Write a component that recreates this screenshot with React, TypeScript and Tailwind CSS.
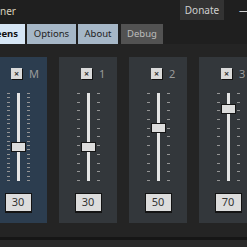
const channels = [
  { label: "M", value: 30, dense: true, master: true },
  { label: "1", value: 30, dense: false, master: false },
  { label: "2", value: 50, dense: false, master: false },
  { label: "3", value: 70, dense: false, master: false },
];

const Ticks = ({ count, side }: { count: number; side: "left" | "right" }) => (
  <div
    className={`absolute top-0 flex h-[88px] flex-col justify-between ${
      side === "left" ? "left-[18px]" : "left-[38px]"
    }`}
  >
    {Array.from({ length: count }).map((_, i) => (
      <span key={i} className="block h-[1px] w-[3px] bg-[#959595]" />
    ))}
  </div>
);

const Channel = ({
  label,
  value,
  dense,
  master,
}: {
  label: string;
  value: number;
  dense: boolean;
  master: boolean;
}) => (
  <div
    className={`flex h-[166px] w-[58px] shrink-0 flex-col ${
      master ? "bg-[#2c3d4f]" : "bg-[#33373b]"
    }`}
  >
    {/* mute + label */}
    <div className="mt-[11px] flex items-center gap-[7px] pl-[22px]">
      <div className="flex h-[11px] w-[11px] items-center justify-center bg-[#dadada] text-[9px] font-bold leading-none text-[#333] shadow-[1px_1px_0_#111]">
        ×
      </div>
      <span className="text-[11px] leading-none text-[#9a9a9a]">{label}</span>
    </div>

    {/* slider */}
    <div className="relative mt-[14px] h-[88px] w-[58px]">
      <Ticks count={dense ? 21 : 11} side="left" />
      <Ticks count={dense ? 21 : 11} side="right" />
      <div className="absolute left-[28px] top-0 h-[88px] w-[3px] bg-[#e6e6e6]" />
      <div
        className="absolute left-[22px] h-[10px] w-[15px] border border-[#161616] bg-[#dcdcdc]"
        style={{ top: 83 - 0.96 * value - 5 }}
      />
    </div>

    {/* value box */}
    <div className="mx-auto mt-[12px] flex h-[20px] w-[27px] items-center justify-center border border-b-2 border-[#141414] bg-[#dcdcdc] text-[11px] text-[#333]">
      {value}
    </div>
  </div>
);

export default function App() {
  return (
    <div className="flex h-[247px] w-[247px] flex-col overflow-hidden bg-[#1f1f1f] font-['Noto_Sans','Open_Sans',sans-serif]">
      {/* title bar */}
      <div className="flex h-[24px] shrink-0 items-start">
        <span className="mt-[6px] text-[10px] leading-none text-[#d8d2bd]">ner</span>
        <div className="ml-auto flex h-[20px] w-[44px] items-center justify-center bg-[#333333] text-[10px] text-[#cfcfcf]">
          Donate
        </div>
        <div className="flex h-[20px] w-[23px] items-center pl-[15px] text-[10px] text-[#cfcfcf]">
          —
        </div>
      </div>

      {/* tabs */}
      <div className="flex h-[20px] shrink-0 items-stretch text-[9.5px]">
        <div className="flex w-[25px] justify-end overflow-hidden">
          <div className="flex shrink-0 items-center bg-[#d6e6f5] px-[7px] font-bold text-[#111]">
            Screens
          </div>
        </div>
        <div className="ml-[2px] flex w-[49px] items-center justify-center bg-[#a6b7c7] text-[#222]">
          Options
        </div>
        <div className="ml-[2px] flex w-[40px] items-center justify-center bg-[#a6b7c7] text-[#222]">
          About
        </div>
        <div className="ml-[3px] flex w-[42px] items-center justify-center bg-[#525252] text-[#bdbdbd]">
          Debug
        </div>
      </div>

      {/* mixer */}
      <div className="flex h-[193px] shrink-0 flex-col bg-[#242424]">
        <div className="ml-[-11px] mt-[13px] flex gap-[12px]">
          {channels.map((c) => (
            <Channel key={c.label} {...c} />
          ))}
        </div>
      </div>
      <div className="h-[3px] shrink-0 bg-[#161616]" />
      <div className="flex-1 bg-[#2b2b2b]" />
    </div>
  );
}
